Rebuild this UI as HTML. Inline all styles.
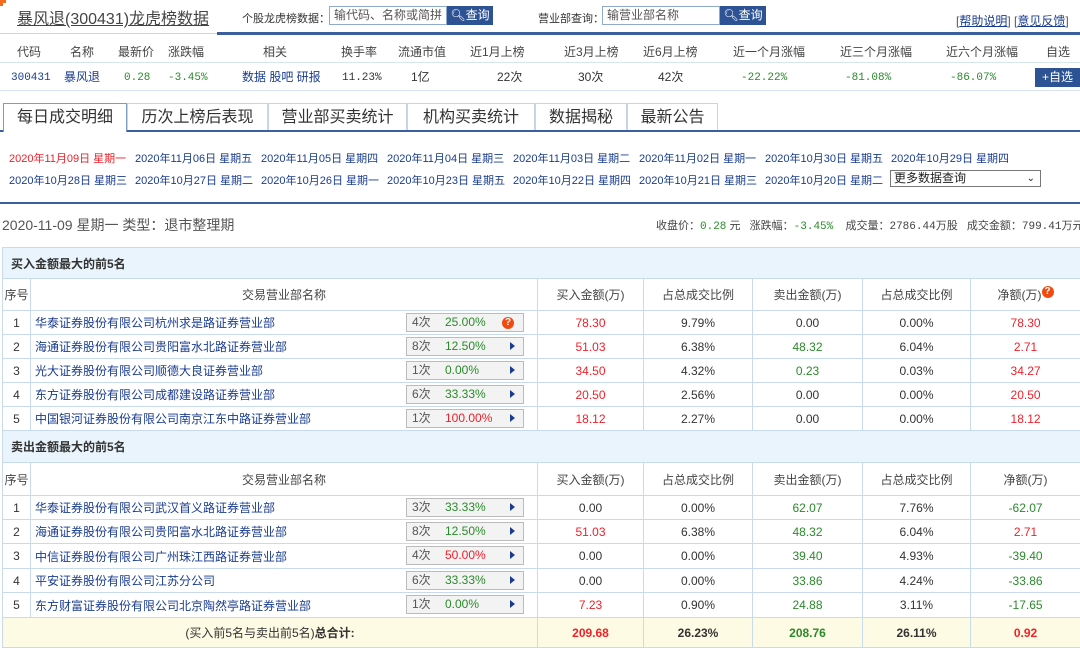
<!DOCTYPE html>
<html><head><meta charset="utf-8">
<style>
*{margin:0;padding:0;box-sizing:border-box}
body{width:1080px;height:647px;overflow:hidden;background:#fff;font-family:"Liberation Sans","Noto Sans CJK SC",sans-serif;font-size:12px;color:#333;position:relative}
.a{position:absolute;white-space:nowrap}
.bl{color:#1a3c8f}
.red{color:#f0202a}
.grn{color:#2a8a2a}
.mono{font-family:"Liberation Mono","Noto Sans CJK SC",monospace;font-size:11px}
.btn{background:#2e5395;color:#fff;font-size:12px;text-align:center}
.inp{border:1px solid #8fa9cf;background:#fff;color:#555;font-size:12px;padding:1px 4px}
.tab{position:absolute;top:103px;height:28px;border:1px solid #c5d6ea;border-bottom:none;font-size:16px;text-align:center;line-height:27px;color:#333}
table{position:absolute;left:2px;top:247px;width:1078px;border-collapse:collapse;table-layout:fixed}
td{border:1px solid #c8daee;text-align:center;height:24px;font-size:12px;padding:0}
tr.sec td{background:#eaf4fd;text-align:left;padding-left:8px;font-weight:bold;height:31px;font-size:12px;color:#333}
tr.sec2 td{height:32px}
tr.hd td{height:32px;color:#444}
tr.hd2 td{height:33px}
tr.r25 td{height:25px}
td.nm{text-align:left;padding-left:4px;position:relative}
td.nm span.n{color:#1a3c8f}
.bd{position:absolute;left:375px;top:2px;width:118px;height:19px;background:#f3f3f3;border:1px solid #bbb;font-size:12px;line-height:17px}
.bd i{font-style:normal;position:absolute;left:5px;color:#555}
.bd b{font-weight:normal;position:absolute;left:38px}
.bd s{text-decoration:none;position:absolute;right:8px;top:4px;width:0;height:0;border-top:4px solid transparent;border-bottom:4px solid transparent;border-left:5px solid #1a3c8f}
.q{display:inline-block;width:12px;height:12px;border-radius:6px;background:#f04a10;color:#fff;font-size:10px;line-height:12px;text-align:center;font-weight:bold}
.bd .q{position:absolute;right:9px;top:3px}
tr.tot td{background:#fdfbe3;height:30px}
.hr span{line-height:14px}
.hr span.mono{top:1px}
</style></head><body>
<div class="a" style="left:0;top:0;width:6px;height:6px;border-left:3px solid #f56a1c;border-top:3px solid #f56a1c"></div>
<div class="a" style="left:17px;top:5px;font-size:16px;color:#444;text-decoration:underline">暴风退(300431)龙虎榜数据</div>
<div class="a" style="left:242px;top:10px;font-size:11px;color:#333">个股龙虎榜数据：</div>
<div class="a inp" style="left:329px;top:6px;width:118px;height:19px;line-height:15px">输代码、名称或简拼</div>
<div class="a btn" style="left:447px;top:6px;width:46px;height:19px;line-height:19px">&#x1F50D;&#xFE0E;查询</div>
<div class="a" style="left:538px;top:10px;font-size:11px">营业部查询：</div>
<div class="a inp" style="left:602px;top:6px;width:118px;height:19px;line-height:15px">输营业部名称</div>
<div class="a btn" style="left:720px;top:6px;width:46px;height:19px;line-height:19px">&#x1F50D;&#xFE0E;查询</div>
<div class="a" style="left:956px;top:12px;color:#555">[<u class="bl">帮助说明</u>] [<u class="bl">意见反馈</u>]</div>
<div class="a" style="left:0;top:33px;width:1080px;height:1px;background:#c6d6ea"></div>
<div class="a" style="left:217px;top:32px;width:863px;height:3px;background:#3a5f9f"></div>

<div class="a" style="left:0;top:43px;width:1080px;font-size:12px;color:#444">
<span class="a" style="left:17px">代码</span><span class="a" style="left:70px">名称</span><span class="a" style="left:118px">最新价</span><span class="a" style="left:168px">涨跌幅</span><span class="a" style="left:263px">相关</span><span class="a" style="left:341px">换手率</span><span class="a" style="left:398px">流通市值</span><span class="a" style="left:470px">近1月上榜</span><span class="a" style="left:564px">近3月上榜</span><span class="a" style="left:643px">近6月上榜</span><span class="a" style="left:733px">近一个月涨幅</span><span class="a" style="left:840px">近三个月涨幅</span><span class="a" style="left:946px">近六个月涨幅</span><span class="a" style="left:1046px">自选</span></div>
<div class="a" style="left:0;top:62px;width:1080px;height:1px;background:#d8e4f2"></div>
<div class="a hr" style="left:0;top:70px;width:1080px">
<span class="a mono bl" style="left:11px">300431</span><span class="a bl" style="left:64px">暴风退</span><span class="a mono grn" style="left:124px">0.28</span><span class="a mono grn" style="left:168px">-3.45%</span><span class="a bl" style="left:242px">数据 股吧 研报</span><span class="a mono" style="left:342px">11.23%</span><span class="a" style="left:411px">1亿</span><span class="a" style="left:497px">22次</span><span class="a" style="left:578px">30次</span><span class="a" style="left:658px">42次</span><span class="a mono grn" style="left:741px">-22.22%</span><span class="a mono grn" style="left:845px">-81.08%</span><span class="a mono grn" style="left:950px">-86.07%</span></div>
<div class="a btn" style="left:1035px;top:68px;width:45px;height:19px;line-height:19px">+自选</div>
<div class="a" style="left:0;top:90px;width:1080px;height:1px;background:#d8e4f2"></div>

<div class="tab" style="left:3px;width:124px;border-color:#7f9cc8;height:29px;background:#fff;z-index:2">每日成交明细</div>
<div class="tab" style="left:127px;width:141px">历次上榜后表现</div>
<div class="tab" style="left:268px;width:139px">营业部买卖统计</div>
<div class="tab" style="left:407px;width:128px">机构买卖统计</div>
<div class="tab" style="left:535px;width:92px">数据揭秘</div>
<div class="tab" style="left:627px;width:91px">最新公告</div>
<div class="a" style="left:0;top:130px;width:1080px;height:2px;background:#3a5f9f"></div>

<div class="a" style="left:9px;top:150px;font-size:11px">
<span class="a red" style="left:0">2020年11月09日 星期一</span>
<span class="a bl" style="left:126px">2020年11月06日 星期五</span>
<span class="a bl" style="left:252px">2020年11月05日 星期四</span>
<span class="a bl" style="left:378px">2020年11月04日 星期三</span>
<span class="a bl" style="left:504px">2020年11月03日 星期二</span>
<span class="a bl" style="left:630px">2020年11月02日 星期一</span>
<span class="a bl" style="left:756px">2020年10月30日 星期五</span>
<span class="a bl" style="left:882px">2020年10月29日 星期四</span>
<span class="a bl" style="left:0;top:22px">2020年10月28日 星期三</span>
<span class="a bl" style="left:126px;top:22px">2020年10月27日 星期二</span>
<span class="a bl" style="left:252px;top:22px">2020年10月26日 星期一</span>
<span class="a bl" style="left:378px;top:22px">2020年10月23日 星期五</span>
<span class="a bl" style="left:504px;top:22px">2020年10月22日 星期四</span>
<span class="a bl" style="left:630px;top:22px">2020年10月21日 星期三</span>
<span class="a bl" style="left:756px;top:22px">2020年10月20日 星期二</span>
</div>
<div class="a" style="left:890px;top:170px;width:151px;height:17px;border:1px solid #777;font-size:12px;line-height:15px;padding-left:3px;color:#222">更多数据查询<span style="position:absolute;right:5px;font-size:10px">&#x2304;</span></div>
<div class="a" style="left:0;top:202px;width:1080px;height:2px;background:#3a5f9f"></div>

<div class="a" style="left:2px;top:215px;font-size:14px;color:#555">2020-11-09 星期一 类型：退市整理期</div>
<div class="a" style="left:656px;top:217px;font-size:11px;color:#444">收盘价：<span class="mono grn">0.28</span> 元 &nbsp; 涨跌幅：<span class="mono grn">-3.45%</span> &nbsp;&nbsp; 成交量：<span class="mono">2786.44</span>万股 &nbsp; 成交金额：<span class="mono">799.41</span>万元</div>

<table>
<colgroup><col style="width:28px"><col style="width:507px"><col style="width:106px"><col style="width:109px"><col style="width:110px"><col style="width:108px"><col style="width:110px"></colgroup>
<tr class="sec"><td colspan="7">买入金额最大的前5名</td></tr>
<tr class="hd"><td>序号</td><td>交易营业部名称</td><td>买入金额(万)</td><td>占总成交比例</td><td>卖出金额(万)</td><td>占总成交比例</td><td>净额(万)<span class="q" style="vertical-align:top">?</span></td></tr>
<tr><td>1</td><td class="nm"><span class="n">华泰证券股份有限公司杭州求是路证券营业部</span><div class="bd"><i>4次</i><b class="grn">25.00%</b><span class="q">?</span></div></td><td class="red">78.30</td><td>9.79%</td><td>0.00</td><td>0.00%</td><td class="red">78.30</td></tr>
<tr><td>2</td><td class="nm"><span class="n">海通证券股份有限公司贵阳富水北路证券营业部</span><div class="bd"><i>8次</i><b class="grn">12.50%</b><s></s></div></td><td class="red">51.03</td><td>6.38%</td><td class="grn">48.32</td><td>6.04%</td><td class="red">2.71</td></tr>
<tr><td>3</td><td class="nm"><span class="n">光大证券股份有限公司顺德大良证券营业部</span><div class="bd"><i>1次</i><b class="grn">0.00%</b><s></s></div></td><td class="red">34.50</td><td>4.32%</td><td class="grn">0.23</td><td>0.03%</td><td class="red">34.27</td></tr>
<tr><td>4</td><td class="nm"><span class="n">东方证券股份有限公司成都建设路证券营业部</span><div class="bd"><i>6次</i><b class="grn">33.33%</b><s></s></div></td><td class="red">20.50</td><td>2.56%</td><td>0.00</td><td>0.00%</td><td class="red">20.50</td></tr>
<tr><td>5</td><td class="nm"><span class="n">中国银河证券股份有限公司南京江东中路证券营业部</span><div class="bd"><i>1次</i><b class="red">100.00%</b><s></s></div></td><td class="red">18.12</td><td>2.27%</td><td>0.00</td><td>0.00%</td><td class="red">18.12</td></tr>
<tr class="sec sec2"><td colspan="7">卖出金额最大的前5名</td></tr>
<tr class="hd hd2"><td>序号</td><td>交易营业部名称</td><td>买入金额(万)</td><td>占总成交比例</td><td>卖出金额(万)</td><td>占总成交比例</td><td>净额(万)</td></tr>
<tr><td>1</td><td class="nm"><span class="n">华泰证券股份有限公司武汉首义路证券营业部</span><div class="bd"><i>3次</i><b class="grn">33.33%</b><s></s></div></td><td>0.00</td><td>0.00%</td><td class="grn">62.07</td><td>7.76%</td><td class="grn">-62.07</td></tr>
<tr><td>2</td><td class="nm"><span class="n">海通证券股份有限公司贵阳富水北路证券营业部</span><div class="bd"><i>8次</i><b class="grn">12.50%</b><s></s></div></td><td class="red">51.03</td><td>6.38%</td><td class="grn">48.32</td><td>6.04%</td><td class="red">2.71</td></tr>
<tr class="r25"><td>3</td><td class="nm"><span class="n">中信证券股份有限公司广州珠江西路证券营业部</span><div class="bd"><i>4次</i><b class="red">50.00%</b><s></s></div></td><td>0.00</td><td>0.00%</td><td class="grn">39.40</td><td>4.93%</td><td class="grn">-39.40</td></tr>
<tr><td>4</td><td class="nm"><span class="n">平安证券股份有限公司江苏分公司</span><div class="bd"><i>6次</i><b class="grn">33.33%</b><s></s></div></td><td>0.00</td><td>0.00%</td><td class="grn">33.86</td><td>4.24%</td><td class="grn">-33.86</td></tr>
<tr class="r25"><td>5</td><td class="nm"><span class="n">东方财富证券股份有限公司北京陶然亭路证券营业部</span><div class="bd"><i>1次</i><b class="grn">0.00%</b><s></s></div></td><td class="red">7.23</td><td>0.90%</td><td class="grn">24.88</td><td>3.11%</td><td class="grn">-17.65</td></tr>
<tr class="tot"><td colspan="2">(买入前5名与卖出前5名)<b>总合计:</b></td><td class="red"><b>209.68</b></td><td><b>26.23%</b></td><td class="grn"><b>208.76</b></td><td><b>26.11%</b></td><td class="red"><b>0.92</b></td></tr>
</table>
</body></html>
